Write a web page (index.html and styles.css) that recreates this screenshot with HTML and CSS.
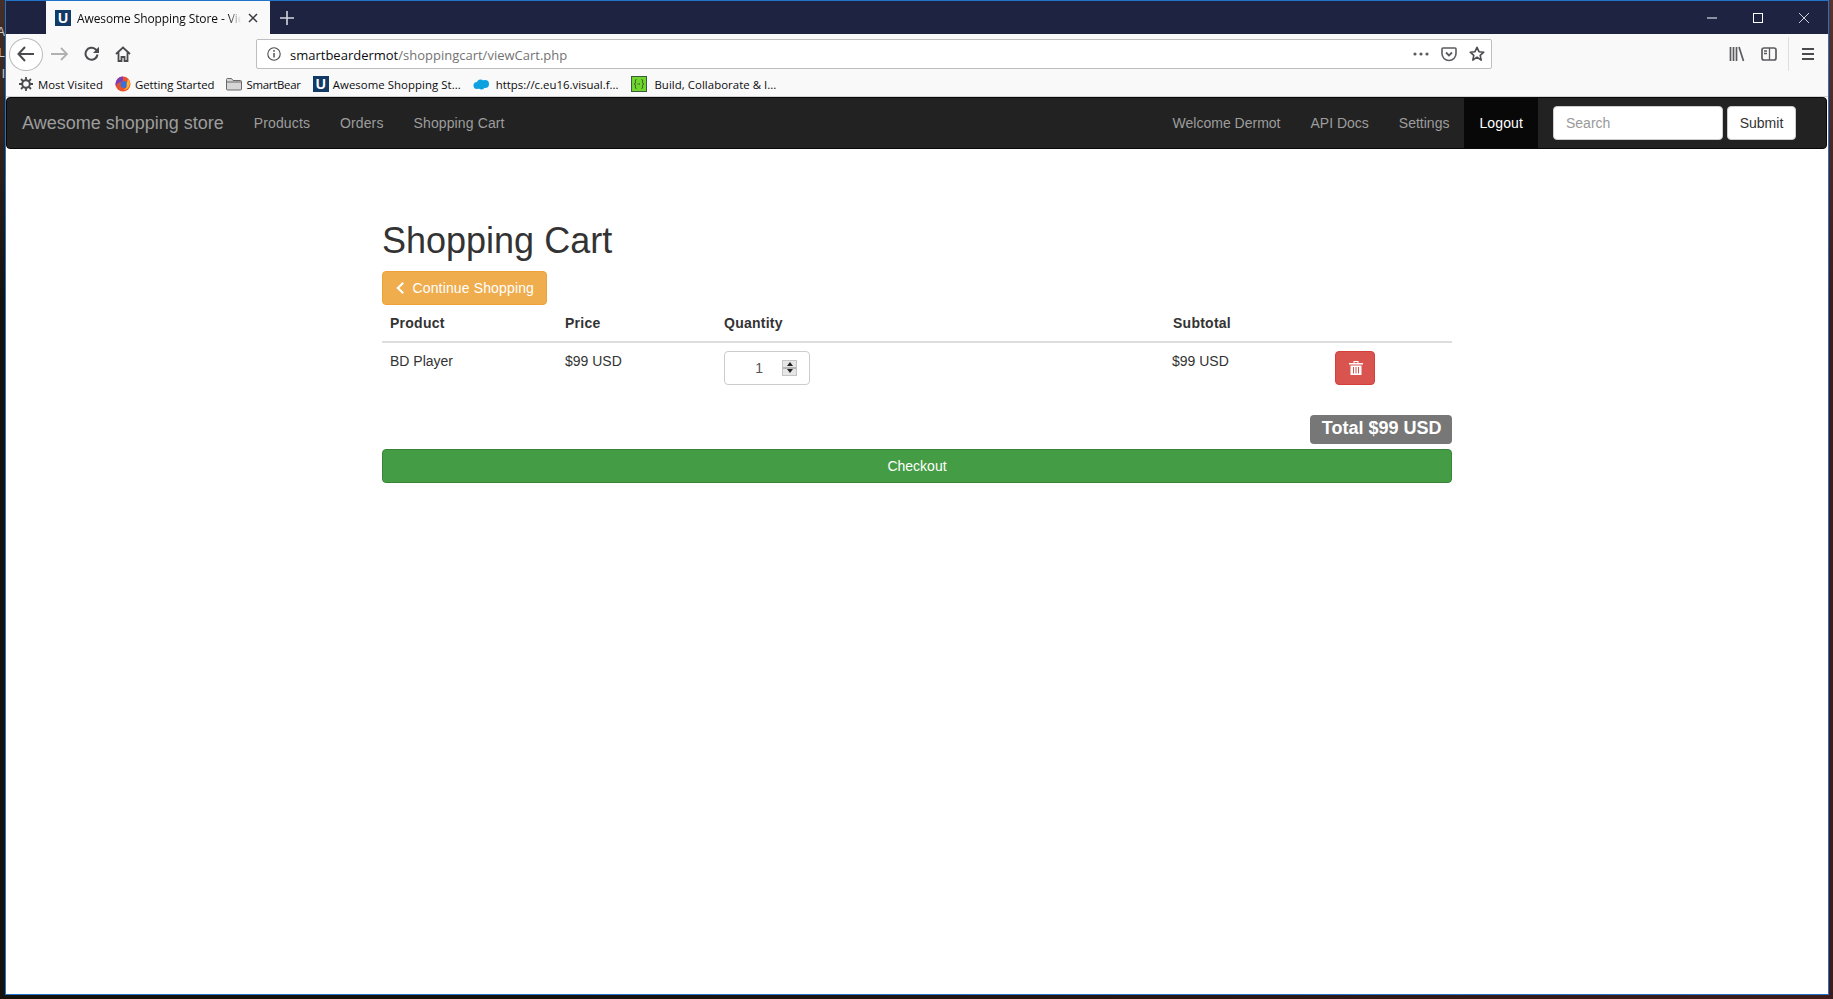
FILE: index.html
```html
<!DOCTYPE html>
<html lang="en">
<head>
  <meta charset="UTF-8" />
  <meta name="viewport" content="width=device-width, initial-scale=1.0"/>
  <title>Awesome Shopping Store - View Cart</title>
  <link rel="stylesheet" href="styles.css">
</head>
<body>
  <div class="desktop-labels">A<br>L<br>I</div>

  <div class="window">
    <div class="tabbar">
      <div class="tab">
        <span class="fav">U</span>
        <span class="tab-title">Awesome Shopping Store - View Cart</span>
        <svg class="tab-close" width="10" height="10" viewBox="0 0 10 10"><path d="M1 1l8 8M9 1l-8 8" stroke="#3b3b40" stroke-width="1.5" fill="none"/></svg>
      </div>
      <svg class="tab-new" width="14" height="14" viewBox="0 0 14 14"><path d="M7 0v14M0 7h14" stroke="#d4d5dc" stroke-width="1.6" fill="none"/></svg>
      <div class="win-controls">
        <svg width="10" height="10" viewBox="0 0 10 10"><path d="M0 5h10" stroke="#fff" fill="none"/></svg>
        <svg width="10" height="10" viewBox="0 0 10 10"><rect x=".5" y=".5" width="9" height="9" stroke="#fff" fill="none"/></svg>
        <svg width="10" height="10" viewBox="0 0 10 10"><path d="M0 0l10 10M10 0l-10 10" stroke="#fff" stroke-width=".8" fill="none"/></svg>
      </div>
    </div>

    <div class="toolbar">
      <span class="back">
        <svg width="18" height="16" viewBox="0 0 18 16"><path d="M8 1L1.500 8 8 15M2 8h15" stroke="#4a4a4f" stroke-width="2" fill="none"/></svg>
      </span>
      <span class="tool">
        <svg width="17" height="14" viewBox="0 0 17 14"><path d="M10 1l6 6-6 6M15 7H0" stroke="#b1b1b3" stroke-width="1.8" fill="none"/></svg>
      </span>
      <span class="tool tool-reload">
        <svg width="16" height="16" viewBox="0 0 16 16"><path d="M13.500 8.500A6 6 0 1 1 11.500 3.200L14 5.500" stroke="#4a4a4f" stroke-width="2" fill="none"/><path d="M15 .8V7H9z" fill="#4a4a4f"/></svg>
      </span>
      <span class="tool">
        <svg width="16" height="16" viewBox="0 0 16 16"><path d="M1 8l7-6.500L15 8M3.500 6.500V15h3v-4h3v4h3V6.500" stroke="#4a4a4f" stroke-width="1.8" fill="none"/></svg>
      </span>

      <div class="urlbar">
        <svg class="url-info" width="14" height="14" viewBox="0 0 14 14"><circle cx="7" cy="7" r="6.200" stroke="#4a4a4f" stroke-width="1.1" fill="none"/><path d="M7 6v4.500" stroke="#4a4a4f" stroke-width="1.4"/><circle cx="7" cy="3.900" r=".9" fill="#4a4a4f"/></svg>
        <span class="url-text">smartbeardermot<span class="url-path">/shoppingcart/viewCart.php</span></span>
        <svg class="url-dots" width="16" height="4" viewBox="0 0 16 4"><circle cx="2" cy="2" r="1.600" fill="#5b5b60"/><circle cx="8" cy="2" r="1.600" fill="#5b5b60"/><circle cx="14" cy="2" r="1.600" fill="#5b5b60"/></svg>
        <svg class="url-pocket" width="16" height="15" viewBox="0 0 16 15"><path d="M2 1h12a1 1 0 0 1 1 1v4.500a7 7 0 0 1-14 0V2a1 1 0 0 1 1-1z" stroke="#5b5b60" stroke-width="1.6" fill="none"/><path d="M5 5.500l3 3 3-3" stroke="#5b5b60" stroke-width="1.8" fill="none"/></svg>
        <svg class="url-star" width="16" height="16" viewBox="0 0 16 16"><path d="M8 1.300l2 4.400 4.800.5-3.600 3.200 1 4.700L8 11.200l-4.200 2.900 1-4.700L1.200 6.200 6 5.700z" stroke="#4a4a4f" stroke-width="1.6" stroke-linejoin="round" fill="none"/></svg>
      </div>

      <span class="tool tool-library">
        <svg width="16" height="16" viewBox="0 0 16 16"><path d="M1.500 1v14M4.500 1v14M7.500 1v14M10 1l4.500 14" stroke="#5b5b60" stroke-width="1.7" fill="none"/></svg>
      </span>
      <span class="tool tool-sidebar">
        <svg width="16" height="14" viewBox="0 0 16 14"><rect x="1" y="1" width="14" height="12" rx="2" stroke="#5b5b60" stroke-width="1.7" fill="none"/><path d="M8.500 1v12M3 4h3M3 6.500h3" stroke="#5b5b60" stroke-width="1.3" fill="none"/></svg>
      </span>
      <span class="tool-sep"></span>
      <span class="tool tool-menu">
        <svg width="12" height="12" viewBox="0 0 12 12"><path d="M0 1h12M0 6h12M0 11h12" stroke="#4a4a4f" stroke-width="1.8" fill="none"/></svg>
      </span>
    </div>

    <div class="bookmarks">
      <a class="bookmark bookmark-visited">
        <svg width="14" height="14" viewBox="0 0 14 14"><circle cx="7" cy="7" r="3.800" stroke="#4a4a4f" stroke-width="2" fill="none"/><path d="M7 0v3M7 11v3M0 7h3M11 7h3M2 2l2 2M10 10l2 2M12 2l-2 2M4 10l-2 2" stroke="#4a4a4f" stroke-width="1.8"/></svg>
        Most Visited
      </a>
      <a class="bookmark bookmark-started">
        <svg width="16" height="16" viewBox="0 0 16 16"><circle cx="8" cy="8" r="7.500" fill="#e8522c"/><path d="M8 .5a7.500 7.500 0 0 0-7 10C3 5 7 7 8 4z" fill="#7b3fb5"/><circle cx="9" cy="8.500" r="3.500" fill="#3a6fd8"/><path d="M13 3a7 7 0 0 1 1.500 7c-1 2-3 4-6 4 2-1 4-3 3-6z" fill="#ffb32c"/></svg>
        Getting Started
      </a>
      <a class="bookmark bookmark-folder">
        <svg width="16" height="14" viewBox="0 0 16 14"><path d="M.5 2.500a1 1 0 0 1 1-1h4l1.500 2h7.500a1 1 0 0 1 1 1v7.500a1 1 0 0 1-1 1h-13a1 1 0 0 1-1-1z" fill="#d6d6d6" stroke="#6a6a6a"/><path d="M.5 5h15" stroke="#6a6a6a"/></svg>
        SmartBear
      </a>
      <a class="bookmark bookmark-store">
        <span class="fav">U</span>
        Awesome Shopping St...
      </a>
      <a class="bookmark bookmark-cloud">
        <svg width="16" height="11" viewBox="0 0 16 11"><g fill="#0ea1e0"><circle cx="4" cy="6.500" r="3.500"/><circle cx="7.500" cy="4" r="3.500"/><circle cx="12" cy="5" r="4"/><circle cx="8.500" cy="7.500" r="3"/></g></svg>
        https://c.eu16.visual.f...
      </a>
      <a class="bookmark bookmark-build">
        <svg width="16" height="16" viewBox="0 0 16 16"><rect x=".5" y=".5" width="15" height="15" fill="#6fd42c" stroke="#3a5a3a"/><path d="M5.500 3.500c-1.500 0-1 2-1 3l-1 1.500 1 1.500c0 1-.5 3 1 3M10.500 3.500c1.500 0 1 2 1 3l1 1.500-1 1.500c0 1 .5 3-1 3" stroke="#2c4a2c" fill="none"/><path d="M6.500 8h3" stroke="#2c4a2c" stroke-dasharray="1 .5"/></svg>
        Build, Collaborate &amp; I...
      </a>
    </div>

    <div class="page">
      <div class="navbar">
        <div class="nav-left">
          <a class="brand">Awesome shopping store</a>
          <a class="nav-link">Products</a>
          <a class="nav-link">Orders</a>
          <a class="nav-link">Shopping Cart</a>
        </div>
        <div class="nav-right">
          <a class="nav-link">Welcome Dermot</a>
          <a class="nav-link">API Docs</a>
          <a class="nav-link">Settings</a>
          <a class="nav-link active">Logout</a>
          <form class="nav-search">
            <input type="text" placeholder="Search">
            <button type="button">Submit</button>
          </form>
        </div>
      </div>

      <div class="cart">
        <h1>Shopping Cart</h1>
        <a class="btn btn-warning">
          <svg class="chevron" width="14" height="14" viewBox="0 0 14 14"><path d="M8.500 1.500L3 7l5.500 5.500" stroke="#fff" stroke-width="2.200" fill="none"/></svg>
          Continue Shopping
        </a>

        <table class="cart-table">
          <thead>
            <tr>
              <th class="col-product">Product</th>
              <th class="col-price">Price</th>
              <th class="col-qty">Quantity</th>
              <th class="col-subtotal">Subtotal</th>
              <th class="col-action"></th>
            </tr>
          </thead>
          <tbody>
            <tr>
              <td>BD Player</td>
              <td>$99 USD</td>
              <td>
                <div class="qty">
                  <span class="qty-value">1</span>
                  <span class="spinner">
                    <svg width="6" height="4" viewBox="0 0 6 4"><path d="M3 0l3 4H0z" fill="#222"/></svg>
                    <svg width="6" height="4" viewBox="0 0 6 4"><path d="M0 0h6L3 4z" fill="#222"/></svg>
                  </span>
                </div>
              </td>
              <td class="cell-subtotal">$99 USD</td>
              <td>
                <a class="btn btn-danger">
                  <svg class="trash" width="14" height="15" viewBox="0 0 14 15"><path d="M0 3h14v1.500H0zM4.500 3V1h5v2h-1V2h-3v1zM1.500 5.500h11V15h-11zM4 7v6.500h1V7zM6.500 7v6.500h1V7zM9 7v6.500h1V7z" fill="#fff" fill-rule="evenodd"/></svg>
                </a>
              </td>
            </tr>
          </tbody>
        </table>

        <div class="summary"><span class="total">Total $99 USD</span></div>
        <a class="btn btn-success">Checkout</a>
      </div>
    </div>
  </div>
</body>
</html>
```

FILE: styles.css
```css
* {
  box-sizing: border-box;
}

html, body {
  height: 100%;
}

body {
  margin: 0;
  padding: 0 4px 4px 5px;
  overflow: hidden;
  font-family: "Liberation Sans", Arial, sans-serif;
  font-size: 14px;
  color: #333;
  background: linear-gradient(180deg, rgba(110, 70, 60, .55), rgba(0, 0, 0, 0) 30%), linear-gradient(90deg, #15120e 0, #15120e 30%, #3f1c1c 100%);
}

.desktop-labels {
  position: absolute;
  left: -5px;
  top: 22px;
  width: 10px;
  overflow: hidden;
  text-align: right;
  font-size: 12px;
  line-height: 21px;
  color: #c9c9c9;
}

.window {
  display: flex;
  flex-direction: column;
  position: relative;
  height: 100%;
  border: 1px solid #1f74c9;
  background-color: #fff;
}

/* browser chrome */
.tabbar {
  display: flex;
  align-items: center;
  height: 33px;
  padding-left: 40px;
  background-color: #1e2342;
}

.tab {
  display: flex;
  align-items: center;
  width: 224px;
  height: 33px;
  padding-left: 9px;
  font-family: "Open Sans", sans-serif;
  font-size: 12px;
  color: #0c0c0d;
  background-color: #f9f9fa;
}

.fav {
  display: flex;
  flex: none;
  align-items: center;
  justify-content: center;
  width: 16px;
  height: 16px;
  font-family: "Liberation Sans", sans-serif;
  font-size: 14px;
  font-weight: bold;
  color: #fff;
  background-color: #123a66;
}

.tab-title {
  width: 164px;
  margin-left: 6px;
  padding-top: 2px;
  overflow: hidden;
  white-space: nowrap;
  letter-spacing: -.1px;
  -webkit-mask-image: linear-gradient(90deg, #000 92%, transparent);
  mask-image: linear-gradient(90deg, #000 92%, transparent);
}

.tab-close {
  margin-left: 7px;
}

.tab-new {
  margin-left: 10px;
}

.win-controls {
  display: flex;
  gap: 36px;
  margin-left: auto;
  margin-right: 19px;
}

.toolbar {
  display: flex;
  align-items: center;
  height: 40px;
  padding-left: 3px;
  background-color: #f9f9fa;
}

.back {
  display: flex;
  align-items: center;
  justify-content: center;
  width: 34px;
  height: 33px;
  border: 1px solid #b9b9bb;
  border-radius: 50%;
  background-color: #fff;
}

.tool {
  display: flex;
  align-items: center;
  justify-content: center;
  width: 32px;
  height: 32px;
}

.tool-reload svg {
  margin-left: 2px;
}

.urlbar {
  display: flex;
  align-items: center;
  width: 1236px;
  height: 30px;
  margin-left: 117px;
  padding: 0 6px 0 10px;
  border: 1px solid #bebebe;
  border-radius: 2px;
  background-color: #fff;
}

.url-text {
  margin-left: 9px;
  padding-top: 2px;
  font-family: "Open Sans", sans-serif;
  font-size: 13px;
  color: #0c0c0d;
}

.url-path {
  color: #737373;
}

.url-dots {
  margin-left: auto;
}

.url-pocket {
  margin-left: 12px;
}

.url-star {
  margin-left: 12px;
}

.tool-library {
  margin-left: 229px;
}

.tool-sep {
  width: 1px;
  height: 34px;
  margin-left: 3px;
  background-color: #dedede;
}

.tool-menu {
  margin-left: 3px;
}

.bookmarks {
  display: flex;
  align-items: center;
  gap: 12px;
  height: 23px;
  padding: 0 0 2px 13px;
  border-bottom: 1px solid #d4d4d4;
  background-color: #f9f9fa;
}

.bookmark {
  display: flex;
  align-items: center;
  gap: 4px;
  font-family: "Open Sans", sans-serif;
  font-size: 11.4px;
  color: #0c0c0d;
  white-space: nowrap;
}

.bookmark-visited {
  gap: 5px;
}

.bookmark-started {
  letter-spacing: -.07px;
}

.bookmark-folder {
  letter-spacing: -.25px;
}

.bookmark-store {
  letter-spacing: .05px;
}

.bookmark-cloud {
  gap: 7px;
}

.bookmark-build {
  gap: 7px;
  margin-left: 1px;
  letter-spacing: .05px;
}

/* page */
.page {
  flex: 1;
  background-color: #fff;
}

.navbar {
  display: flex;
  justify-content: space-between;
  height: 52px;
  margin-right: 1px;
  border: 1px solid #080808;
  border-radius: 4px;
  background-color: #222;
}

.nav-left, .nav-right {
  display: flex;
}

.brand {
  padding: 15px;
  font-size: 18px;
  line-height: 20px;
  color: #9d9d9d;
}

.nav-link {
  padding: 15px;
  line-height: 20px;
  color: #9d9d9d;
}

.nav-left .nav-link {
  letter-spacing: .12px;
}

.nav-link.active {
  letter-spacing: .12px;
  color: #fff;
  background-color: #080808;
}

.nav-search {
  display: flex;
  gap: 4px;
  margin: 8px 30px 0 15px;
}

.nav-search input {
  width: 170px;
  height: 34px;
  padding: 6px 12px;
  border: 1px solid #ccc;
  border-radius: 4px;
  font-family: inherit;
  font-size: 14px;
}

.nav-search input::placeholder {
  color: #999;
}

.nav-search button {
  width: 69px;
  height: 34px;
  border: 1px solid #ccc;
  border-radius: 4px;
  font-family: inherit;
  font-size: 14px;
  color: #333;
  background-color: #fff;
}

.cart {
  width: 1070px;
  margin: 0 auto;
  padding-top: 72px;
}

.cart h1 {
  margin: 0 0 10px;
  font-size: 36px;
  font-weight: 500;
  line-height: 1.1;
}

.btn {
  display: inline-flex;
  align-items: center;
  justify-content: center;
  height: 34px;
  padding: 6px 12px;
  border: 1px solid transparent;
  border-radius: 4px;
  white-space: nowrap;
  color: #fff;
}

.btn-warning {
  width: 165px;
  justify-content: flex-start;
  letter-spacing: .14px;
  border-color: #eea236;
  background-color: #f0ad4e;
}

.chevron {
  margin-right: 4px;
}

.btn-danger {
  width: 40px;
  padding: 0;
  border-color: #d43f3a;
  background-color: #d9534f;
}

.trash {
  margin: 0 0 1px 1px;
}

.btn-success {
  display: flex;
  border-color: #398439;
  background-color: #449d44;
}

.cart-table {
  width: 100%;
  border-collapse: collapse;
  table-layout: fixed;
}

.cart-table th {
  padding: 8px;
  border-bottom: 2px solid #ddd;
  line-height: 20px;
  letter-spacing: .25px;
  text-align: left;
}

.cart-table td {
  height: 50px;
  padding: 8px;
  line-height: 20px;
  vertical-align: top;
}

.cart-table .cell-subtotal {
  padding-left: 7px;
}

.col-product {
  width: 175px;
}

.col-price {
  width: 159px;
}

.col-qty {
  width: 449px;
}

.col-subtotal {
  width: 162px;
}

.col-action {
  width: 125px;
}

.qty {
  display: flex;
  align-items: center;
  width: 86px;
  height: 34px;
  border: 1px solid #ccc;
  border-radius: 4px;
  color: #555;
}

.qty-value {
  width: 38px;
  text-align: right;
  margin-right: 19px;
}

.spinner {
  display: flex;
  flex-direction: column;
  align-items: center;
  justify-content: space-around;
  width: 15px;
  height: 16px;
  border: 1px solid #c4c4c4;
  background: linear-gradient(180deg, #e6e6e6 0, #e6e6e6 46%, #b5b5b5 46%, #b5b5b5 54%, #e6e6e6 54%);
}

.spinner svg {
  display: block;
}

.summary {
  display: flex;
  justify-content: flex-end;
  margin: 22px 0 5px;
}

.total {
  padding: 4px 10.5px 7px 11.5px;
  border-radius: 4px;
  font-size: 18px;
  font-weight: bold;
  line-height: 18px;
  color: #fff;
  background-color: #777;
}
```
